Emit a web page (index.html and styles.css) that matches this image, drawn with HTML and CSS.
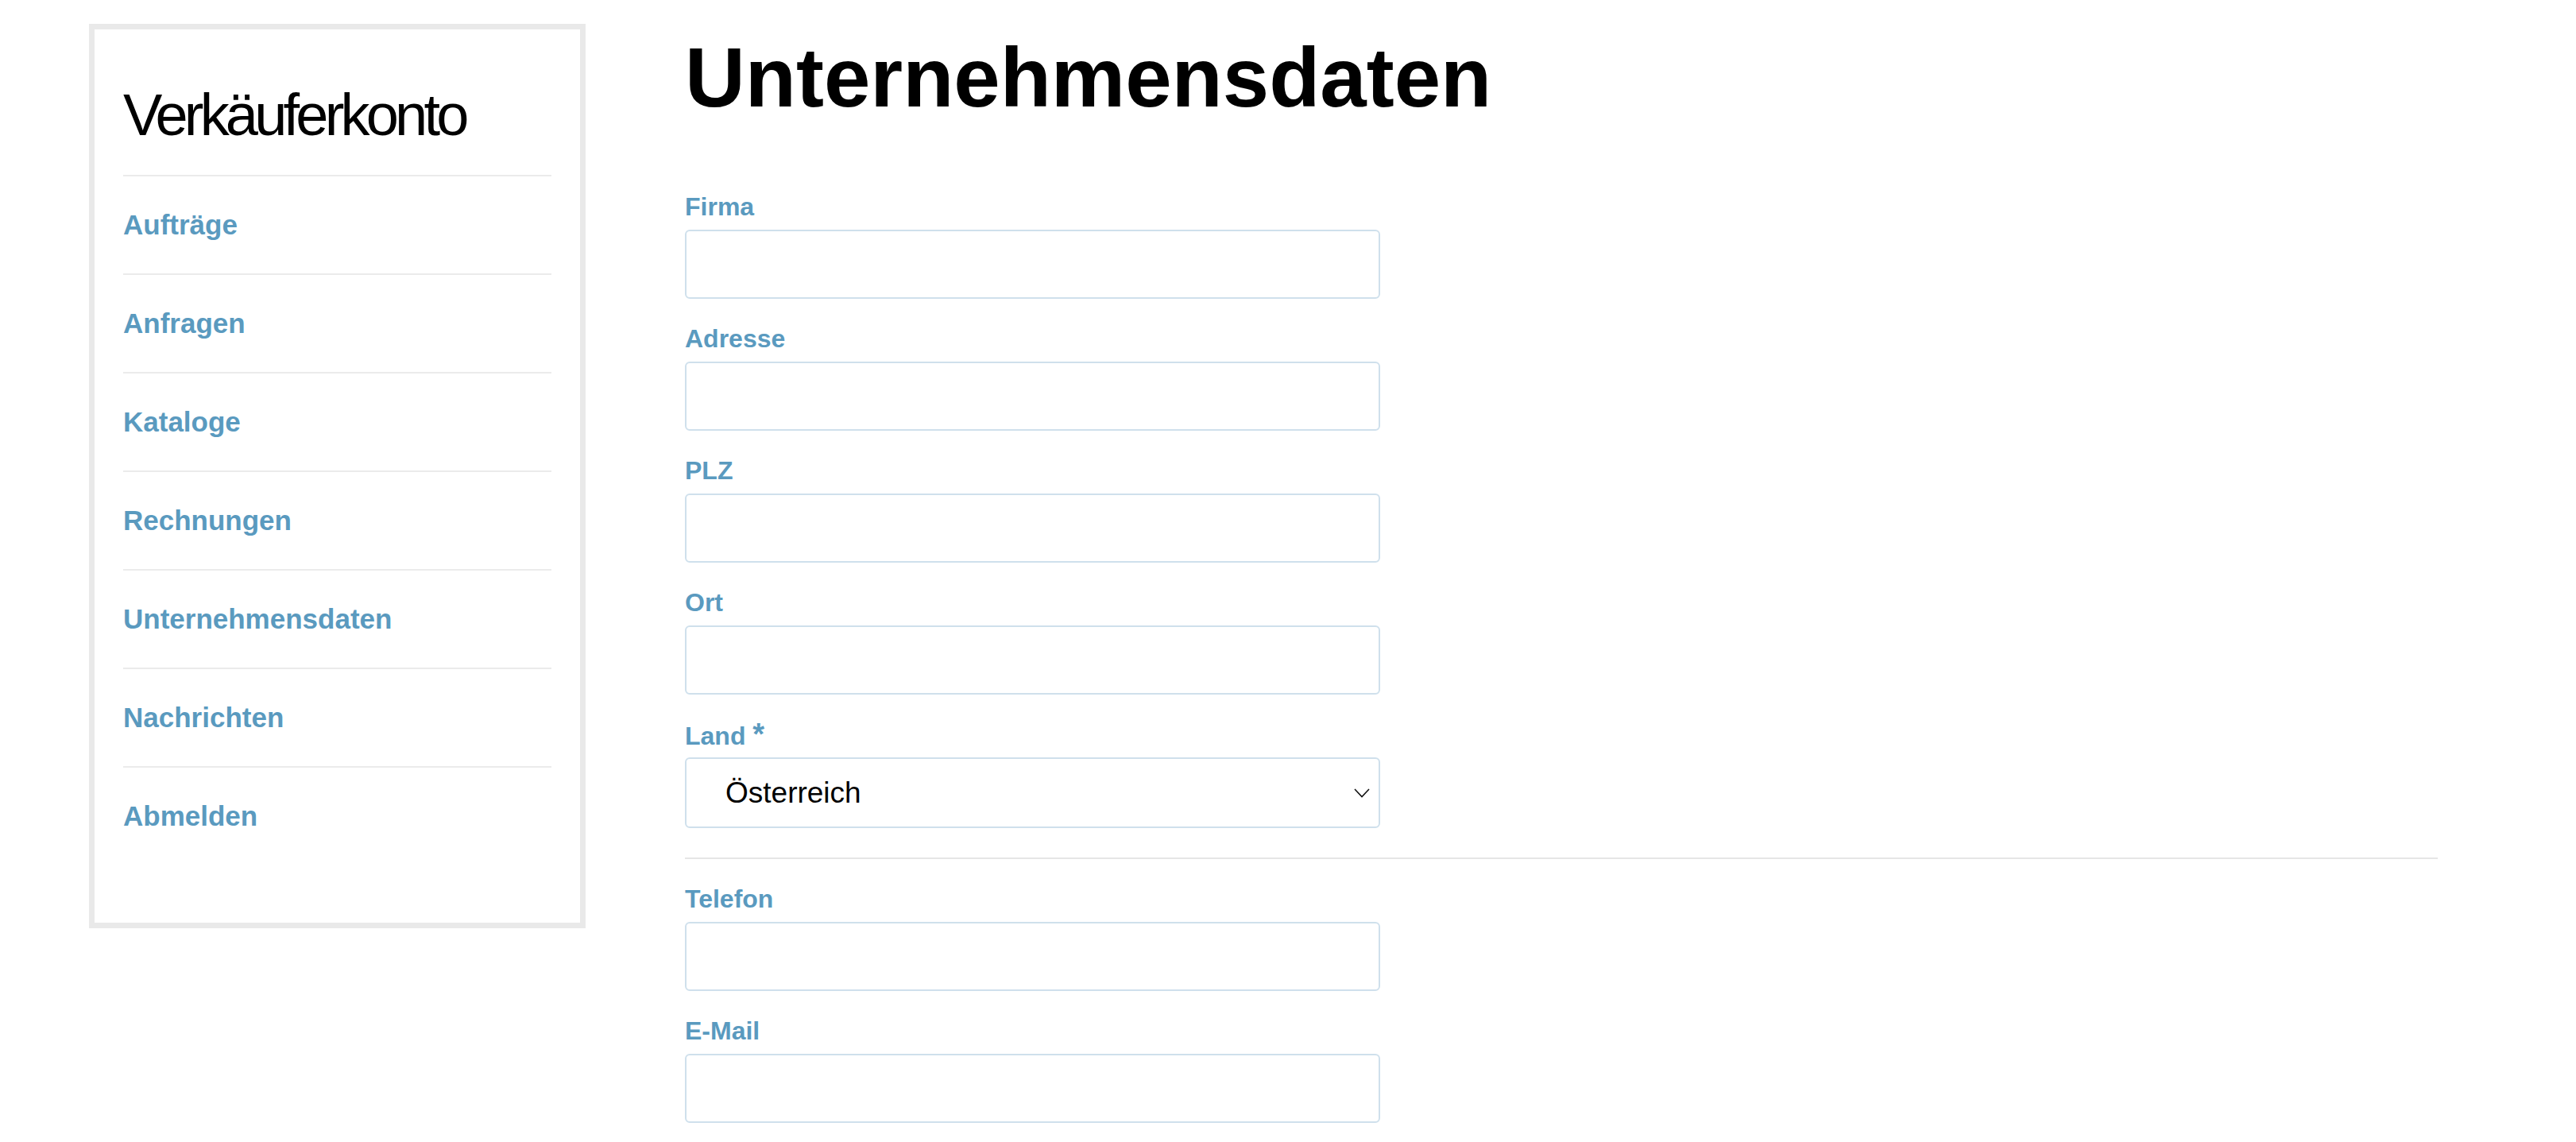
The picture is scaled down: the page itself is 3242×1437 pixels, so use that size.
FILE: index.html
```html
<!DOCTYPE html>
<html lang="de">
<head>
<meta charset="utf-8">
<title>Unternehmensdaten</title>
<link rel="stylesheet" href="styles.css">
</head>
<body>
<div class="page">
  <aside class="sidebar">
    <h2 class="sidebar-title">Verkäuferkonto</h2>
    <ul class="nav">
      <li class="nav-item"><a href="#">Aufträge</a></li>
      <li class="nav-item"><a href="#">Anfragen</a></li>
      <li class="nav-item"><a href="#">Kataloge</a></li>
      <li class="nav-item"><a href="#">Rechnungen</a></li>
      <li class="nav-item"><a href="#">Unternehmensdaten</a></li>
      <li class="nav-item"><a href="#">Nachrichten</a></li>
      <li class="nav-item"><a href="#">Abmelden</a></li>
    </ul>
  </aside>
  <main class="main">
    <h1 class="heading">Unternehmensdaten</h1>
    <form class="form">
      <div class="field">
        <label class="label" for="firma">Firma</label>
        <input class="input" id="firma" type="text">
      </div>
      <div class="field">
        <label class="label" for="adresse">Adresse</label>
        <input class="input" id="adresse" type="text">
      </div>
      <div class="field">
        <label class="label" for="plz">PLZ</label>
        <input class="input" id="plz" type="text">
      </div>
      <div class="field">
        <label class="label" for="ort">Ort</label>
        <input class="input" id="ort" type="text">
      </div>
      <div class="field">
        <label class="label" for="land">Land <span class="req">*</span></label>
        <div class="select-wrap">
          <select class="input select" id="land">
            <option>Österreich</option>
            <option>Deutschland</option>
            <option>Schweiz</option>
          </select>
          <svg class="chevron" width="20" height="12" viewBox="0 0 20 12" aria-hidden="true">
            <path d="M1 1 L10 10.5 L19 1" fill="none" stroke="#111" stroke-width="1.6"/>
          </svg>
        </div>
      </div>
      <div class="divider"></div>
      <div class="field">
        <label class="label" for="telefon">Telefon</label>
        <input class="input" id="telefon" type="text">
      </div>
      <div class="field">
        <label class="label" for="email">E-Mail</label>
        <input class="input" id="email" type="email">
      </div>
    </form>
  </main>
</div>
</body>
</html>
```

FILE: styles.css
```css
html, body {
  margin: 0;
  padding: 0;
  background: #ffffff;
}

body {
  font-family: "Liberation Sans", Arial, sans-serif;
  color: #000;
}

.page {
  display: flex;
  align-items: flex-start;
  gap: 125px;
  padding: 30px 0 0 112px;
}

.sidebar {
  flex: 0 0 auto;
  width: 625px;
  box-sizing: border-box;
  border: 7px solid #e9e9e9;
  padding: 65px 36px 73px 36px;
  background: #fff;
}

.sidebar-title {
  margin: 0 0 33px 0;
  font-size: 74px;
  font-weight: normal;
  line-height: 85px;
  letter-spacing: -4.8px;
  color: #000;
}

.nav {
  list-style: none;
  margin: 0;
  padding: 0;
}

.nav-item {
  border-top: 2px solid #ebebeb;
  padding: 40px 0;
  font-size: 35px;
  line-height: 42px;
  height: 42px;
}

.nav-item a {
  font-size: 35px;
  font-weight: bold;
  color: #5a9abf;
  text-decoration: none;
}

.main {
  flex: 0 0 auto;
  width: 2206px;
  padding-top: 8px;
}

.heading {
  margin: 0 0 84px 0;
  font-size: 105px;
  font-weight: bold;
  line-height: 120px;
  color: #000;
}

.form {
  margin: 0;
}

.field {
  margin-bottom: 32px;
}

.label {
  display: block;
  margin-bottom: 10px;
  font-size: 32px;
  font-weight: bold;
  line-height: 37px;
  height: 37px;
  color: #5a9abf;
}

.req {
  font-size: 38px;
  font-weight: bold;
  line-height: 37px;
}

.input {
  display: block;
  width: 875px;
  height: 87px;
  box-sizing: border-box;
  border: 2px solid #cfe0ec;
  border-radius: 6px;
  background: #fff;
  margin: 0;
  padding: 0 20px;
  font-family: "Liberation Sans", Arial, sans-serif;
  font-size: 37px;
  color: #000;
  outline: none;
}

.select-wrap {
  position: relative;
  width: 875px;
}

.select {
  appearance: none;
  -webkit-appearance: none;
  height: 89px;
  padding-left: 49px;
}

.chevron {
  position: absolute;
  right: 13px;
  top: 39px;
  pointer-events: none;
}

.divider {
  width: 2206px;
  border-top: 2px solid #e6e6e6;
  margin: 37px 0 32px 0;
}
```
